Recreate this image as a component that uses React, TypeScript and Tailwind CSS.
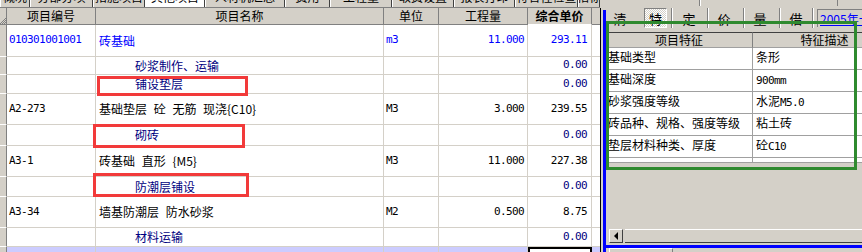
import React from "react";

const cjk = "font-['Noto_Sans_CJK_SC','Noto_Sans_CJK_SC',sans-serif]";
const mono = "font-['DejaVu_Sans_Mono','Noto_Sans_CJK_SC',monospace] text-[11px] tracking-[-0.6px]";
const gridCols = "grid grid-cols-[7px_89px_288px_55px_89px_64px_8px]";

type Row = {
  h: string;
  code?: string;
  name?: string;
  unit?: string;
  qty?: string;
  price?: string;
  kind: "blue" | "main" | "sub" | "selected";
};

const rows: Row[] = [
  { h: "h-[32px]", code: "010301001001", name: "砖基础", unit: "m3", qty: "11.000", price: "293.11", kind: "blue" },
  { h: "h-[18px]", name: "砂浆制作、运输", price: "0.00", kind: "sub" },
  { h: "h-[19px]", name: "铺设垫层", price: "0.00", kind: "sub" },
  { h: "h-[31px]", code: "A2-273", name: "基础垫层 砼 无筋 现浇{C10}", unit: "M3", qty: "3.000", price: "239.55", kind: "main" },
  { h: "h-[21px]", name: "砌砖", price: "0.00", kind: "sub" },
  { h: "h-[31px]", code: "A3-1", name: "砖基础 直形 {M5}", unit: "M3", qty: "11.000", price: "227.38", kind: "main" },
  { h: "h-[20px]", name: "防潮层铺设", price: "0.00", kind: "sub" },
  { h: "h-[31px]", code: "A3-34", name: "墙基防潮层 防水砂浆", unit: "M2", qty: "0.500", price: "8.75", kind: "main" },
  { h: "h-[19px]", name: "材料运输", price: "0.00", kind: "sub" },
  { h: "h-[20px]", kind: "selected" },
];

const topTabs = [
  { w: "w-[30px]", t: "概况" },
  { w: "w-[63px]", t: "分部分项" },
  { w: "w-[52px]", t: "措施项目" },
  { w: "w-[60px]", t: "其他项目" },
  { w: "w-[80px]", t: "人材机汇总" },
  { w: "w-[45px]", t: "费用" },
  { w: "w-[62px]", t: "工程量" },
  { w: "w-[62px]", t: "取费设置" },
  { w: "w-[61px]", t: "报表打印" },
  { w: "w-[63px]", t: "符合性检查" },
  { w: "w-[22px]", t: "指标" },
];

const features = [
  ["基础类型", "条形"],
  ["基础深度", "900mm"],
  ["砂浆强度等级", "水泥M5.0"],
  ["砖品种、规格、强度等级", "粘土砖"],
  ["垫层材料种类、厚度", "砼C10"],
];

const tools = [
  { c: "清", w: "w-[28px]", ml: "ml-0" },
  { c: "特", w: "w-[23px]", ml: "ml-[10px]", pressed: true },
  { c: "定", w: "w-[28px]", ml: "ml-[2px]", sep: true },
  { c: "价", w: "w-[30px]", ml: "ml-0", sep: true },
  { c: "量", w: "w-[30px]", ml: "ml-0", sep: true },
  { c: "借", w: "w-[24px]", ml: "ml-[3px]", sep: true },
];

function DataRow({ r }: { r: Row }) {
  const sel = r.kind === "selected";
  const textColor =
    r.kind === "blue" ? "text-[#0000ff]" : r.kind === "sub" ? "text-[#000080]" : "text-black";
  const cell = `border-r border-b border-[#d4d0c8] flex items-center overflow-hidden whitespace-nowrap ${
    sel ? "bg-[#ccccff]" : "bg-white"
  }`;
  return (
    <div className={`${gridCols} ${r.h}`}>
      <div className="bg-[#d4d0c8] border-b border-white border-r border-r-[#808080]" />
      <div className={`${cell} pl-[2px] ${mono} ${textColor}`}>{r.code}</div>
      <div
        className={`${cell} ${r.kind === "sub" ? "pl-[39px]" : "pl-[3px]"} ${cjk} text-[12px] [word-spacing:4px] ${textColor}`}
      >
        {r.name}
      </div>
      <div className={`${cell} pl-[2px] ${mono} ${textColor}`}>{r.unit}</div>
      <div className={`${cell} justify-end pr-[3px] ${mono} ${textColor}`}>{r.qty}</div>
      {sel ? (
        <div className="border-2 border-black bg-white" />
      ) : (
        <div className={`${cell} justify-end pr-[4px] ${mono} ${r.kind === "main" ? "text-black" : r.kind === "blue" ? "text-[#0000ff]" : "text-[#000080]"}`}>
          {r.price}
        </div>
      )}
      <div className={`border-b border-[#d4d0c8] ${sel ? "bg-[#ccccff]" : "bg-white"}`} />
    </div>
  );
}

export default function App() {
  return (
    <div className={`relative flex w-[862px] h-[252px] overflow-hidden bg-[#d4d0c8] ${cjk}`}>
      {/* left: bill of quantities grid */}
      <div className="w-[600px] shrink-0 overflow-hidden">
        <div className="flex h-[8px] overflow-hidden border-b border-[#808080]">
          {topTabs.map((tab, i) => (
            <div
              key={tab.t}
              className={`${tab.w} shrink-0 h-[8px] overflow-hidden border-l border-white border-r border-r-[#404040] flex justify-center items-start ${
                i === 3 ? "bg-white" : "bg-[#d4d0c8]"
              }`}
            >
              <span className="block text-[12px] leading-[12px] -mt-[9px] text-black whitespace-nowrap">{tab.t}</span>
            </div>
          ))}
        </div>
        <div className={`${gridCols} h-[17px] text-[12px] text-black`}>
          <div className="bg-[#d4d0c8] border-b border-[#808080] border-r flex items-end justify-center">
            <svg width="6" height="6" viewBox="0 0 6 6">
              <path d="M0 6 L6 0 M2 6 L6 2 M4 6 L6 4" stroke="#808080" strokeWidth="1" />
            </svg>
          </div>
          {["项目编号", "项目名称", "单位", "工程量"].map((h) => (
            <div
              key={h}
              className="bg-[#d4d0c8] border-b border-r border-[#808080] flex items-center justify-center leading-none"
            >
              {h}
            </div>
          ))}
          <div className="bg-[#d4d0c8] border-b border-white border-r border-r-[#808080] flex items-center justify-center leading-none font-bold">
            综合单价
          </div>
          <div className="bg-[#d4d0c8] border-b border-[#808080]" />
        </div>
        {rows.map((r, i) => (
          <DataRow key={i} r={r} />
        ))}
      </div>

      {/* splitter */}
      <div className="w-[1px] shrink-0 bg-black mt-[8px]" />
      <div className="w-[2px] shrink-0 bg-[#d4d0c8]" />
      <div className="w-[3px] shrink-0 bg-[#0000ff] mt-[10px]" />

      {/* right: item features panel */}
      <div className="w-[256px] shrink-0 flex flex-col">
        <div className="h-[6px] shrink-0 flex overflow-hidden">
          <div className="w-[94px] border-r border-[#808080]" />
          <div className="w-[138px] border-r border-[#808080] border-l border-l-white" />
        </div>
        <div className="h-[26px] shrink-0 pt-[2px] flex items-start text-[13px] text-black">
          {tools.map((t) => (
            <React.Fragment key={t.c}>
              {t.sep && <div className="w-[2px] h-[20px] border-l border-[#808080] border-r border-r-white shrink-0 ml-[4px]" />}
              <div
                className={`${t.w} ${t.ml} h-[20px] shrink-0 flex items-center justify-center leading-none ${
                  t.pressed
                    ? "border border-[#808080] border-r-white border-b-white bg-[repeating-conic-gradient(#ffffff_0_25%,#d4d0c8_0_50%)] bg-[length:2px_2px]"
                    : ""
                }`}
              >
                {t.c}
              </div>
            </React.Fragment>
          ))}
          <div className="w-[2px] h-[20px] border-l border-[#808080] border-r border-r-white shrink-0 ml-[4px]" />
          <div className="ml-[3px] mt-[1px] h-[18px] flex-1 border-t border-l border-[#808080] bg-[#d4d0c8] flex items-center pl-[2px] overflow-hidden whitespace-nowrap">
            <span className="text-[12px] leading-none text-[#0000ff] underline">2005年十</span>
          </div>
        </div>

        <div className="w-[256px] shrink-0 overflow-hidden bg-white">
          <div className="w-[290px] grid grid-cols-[147px_143px] text-[12px] text-black">
            <div className="h-[16px] border-t border-[#404040] border-b border-b-[#a0a0a0] border-r border-r-[#808080] bg-[#d4d0c8] flex items-center justify-center leading-none">
              项目特征
            </div>
            <div className="h-[16px] border-t border-[#404040] border-b border-b-[#a0a0a0] bg-[#d4d0c8] flex items-center justify-center leading-none">
              特征描述
            </div>
            {features.map(([k, v]) => (
              <React.Fragment key={k}>
                <div className="h-[22px] border-b border-r border-[#a0a0a0] pl-[2px] pt-[2px] leading-[14px] whitespace-nowrap">
                  {k}
                </div>
                <div className="h-[22px] border-b border-[#a0a0a0] pl-[3px] pt-[2px] leading-[14px] whitespace-nowrap">
                  {v.split(/([A-Za-z0-9.]+)/).map((part, j) =>
                    /[A-Za-z0-9]/.test(part) ? (
                      <span key={j} className={mono}>
                        {part}
                      </span>
                    ) : (
                      <span key={j}>{part}</span>
                    )
                  )}
                </div>
              </React.Fragment>
            ))}
            <div className="h-[5px] border-b border-r border-[#a0a0a0]" />
            <div className="h-[5px] border-b border-[#a0a0a0]" />
          </div>
        </div>

        <div className="h-[66px] shrink-0" />

        <div className="h-[14px] shrink-0 flex pl-[3px]">
          <div className="w-[14px] h-[14px] border border-white border-r-[#404040] border-b-[#404040] bg-[#d4d0c8] flex items-center justify-center">
            <svg width="5" height="8" viewBox="0 0 5 8">
              <path d="M4 0 L0 4 L4 8 Z" fill="black" />
            </svg>
          </div>
          <div className="flex-1 ml-[2px] border-t border-white border-b border-b-[#404040]" />
        </div>
        <div className="h-[2px] shrink-0" />
        <div className="h-[3px] shrink-0 bg-[#0000ff]" />
        <div className="h-[4px] shrink-0 pl-[3px] flex">
          <div className="w-[64px] border-l border-t border-white border-r border-r-[#808080]" />
        </div>
      </div>

      {/* annotation overlays */}
      <div className="absolute left-[97px] top-[76px] w-[151px] h-[20px] border-[3px] border-[#f23a3a]" />
      <div className="absolute left-[93px] top-[124px] w-[152px] h-[24px] border-[3px] border-[#f23a3a]" />
      <div className="absolute left-[93px] top-[173px] w-[156px] h-[24px] border-[3px] border-[#f23a3a]" />
      <div className="absolute left-[606px] top-[21px] w-[251px] h-[149px] border-[3px] border-[#2f8a2f]" />
    </div>
  );
}
